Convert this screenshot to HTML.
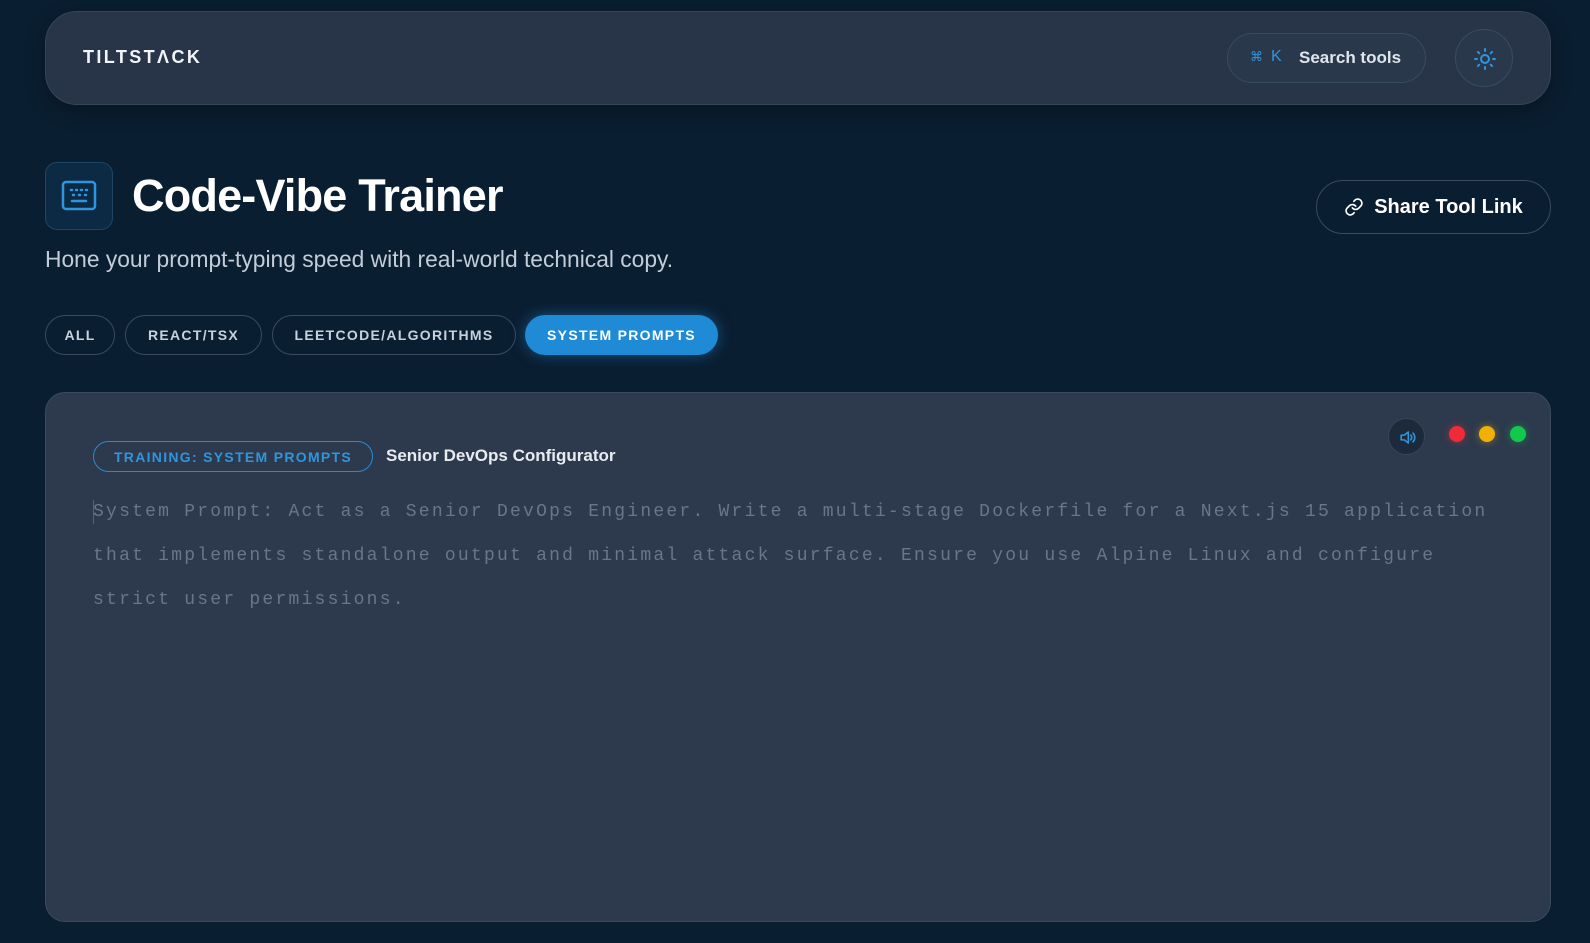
<!DOCTYPE html>
<html><head><meta charset="utf-8"><style>
*{box-sizing:border-box;margin:0;padding:0}
body{width:1590px;height:943px;background:#0a1e31;font-family:"Liberation Sans",sans-serif;position:relative;overflow:hidden;color:#fff}
.abs{position:absolute}
.hdr{left:45px;top:11px;width:1506px;height:94px;background:#283548;border:1px solid #34445a;border-radius:32px;box-shadow:0 6px 20px rgba(0,0,0,.3)}
.logo{left:83px;top:47px;font-size:18px;font-weight:700;letter-spacing:2.4px;color:#f1f4f8}
.search{left:1227px;top:33px;width:199px;height:50px;border:1px solid #3a4a60;border-radius:25px;background:#2a384b}
.sun{left:1455px;top:29px;width:58px;height:58px;border-radius:50%;border:1px solid #3a4a60;background:#2a384b}
.ibox{left:45px;top:162px;width:68px;height:68px;border-radius:12px;background:#0d2a44;border:1px solid #1e4566}
h1{position:absolute;left:132px;top:170px;font-size:45px;font-weight:700;letter-spacing:-0.8px;color:#fff}
.sub{left:45px;top:246px;font-size:22.8px;color:#c3ccd8}
.share{left:1316px;top:180px;width:235px;height:54px;border:1px solid #3a4a60;border-radius:27px;font-size:20px;font-weight:700;display:flex;align-items:center;justify-content:center;gap:10px}
.tab{top:315px;height:40px;border:1px solid #3a4a60;border-radius:20px;font-size:14px;font-weight:700;letter-spacing:1.3px;color:#c9d1dc;display:flex;align-items:center;justify-content:center}
.tab.on{background:#1f8ad6;border-color:#1f8ad6;color:#fff;box-shadow:0 0 14px rgba(31,138,214,.5)}
.card{left:45px;top:392px;width:1506px;height:530px;background:#2d3a4d;border:1px solid #3a4a60;border-radius:20px}
.badge{left:93px;top:441px;width:280px;height:31px;border:1.5px solid #2a8ad0;border-radius:16px;color:#2f95dd;font-size:14px;font-weight:700;letter-spacing:1.3px;display:flex;align-items:center;justify-content:center}
.ttl{left:386px;top:446px;font-size:17px;font-weight:700;color:#e8ecf1}
.txt{left:93px;top:490px;width:1430px;font-family:"Liberation Mono",monospace;font-size:18px;letter-spacing:2.23px;line-height:44px;color:#687689}
.dot{width:16px;height:16px;border-radius:50%;top:426px}
</style></head><body>
<div class="abs hdr"></div>
<div class="abs logo">TILTST&#923;CK</div>
<div class="abs search"><span class="abs" style="left:22px;top:15px;font-size:13px;color:#2f95dd">&#8984;</span><span class="abs" style="left:43px;top:14px;font-size:16px;color:#2f95dd">K</span><span class="abs" style="left:71px;top:14px;font-size:17px;font-weight:700;color:#dfe5ec">Search tools</span></div>
<div class="abs sun"><svg class="abs" style="left:17px;top:17px" width="24" height="24" viewBox="0 0 24 24" fill="none" stroke="#2f95dd" stroke-width="2" stroke-linecap="round"><circle cx="12" cy="12" r="4"/><path d="M12 2v2M12 20v2M2 12h2M20 12h2M4.9 4.9l1.4 1.4M17.7 17.7l1.4 1.4M4.9 19.1l1.4-1.4M17.7 6.3l1.4-1.4"/></svg></div>
<div class="abs ibox"><svg class="abs" style="left:15px;top:16px" width="36" height="34" viewBox="0 0 36 34" fill="none" stroke="#2f95dd" stroke-width="2.5"><rect x="2" y="3" width="32" height="27" rx="3"/><path d="M10 11h1M15 11h1M20 11h1M25 11h1M12 16h1M18 16h1M24 16h1M11 22h14" stroke-linecap="round"/></svg></div>
<h1>Code-Vibe Trainer</h1>
<div class="abs sub">Hone your prompt-typing speed with real-world technical copy.</div>
<div class="abs share"><svg width="20" height="20" viewBox="0 0 24 24" fill="none" stroke="#fff" stroke-width="2" stroke-linecap="round"><path d="M10 13a5 5 0 0 0 7.5.5l3-3a5 5 0 0 0-7-7l-1.7 1.7"/><path d="M14 11a5 5 0 0 0-7.5-.5l-3 3a5 5 0 0 0 7 7l1.7-1.7"/></svg>Share Tool Link</div>
<div class="abs tab" style="left:45px;width:70px">ALL</div>
<div class="abs tab" style="left:125px;width:137px">REACT/TSX</div>
<div class="abs tab" style="left:272px;width:244px">LEETCODE/ALGORITHMS</div>
<div class="abs tab on" style="left:525px;width:193px">SYSTEM PROMPTS</div>
<div class="abs card"></div>
<div class="abs badge">TRAINING: SYSTEM PROMPTS</div>
<div class="abs ttl">Senior DevOps Configurator</div>
<div class="abs" style="left:1388px;top:418px;width:37px;height:37px;border-radius:50%;background:#1d2a3b;border:1px solid #34445a"><svg class="abs" style="left:9px;top:9px" width="19" height="19" viewBox="0 0 24 24" fill="none" stroke="#2f95dd" stroke-width="2" stroke-linejoin="round" stroke-linecap="round"><path d="M4 9h4l5-4v14l-5-4H4z"/><path d="M16 9a4 4 0 0 1 0 6M19 6.5a8 8 0 0 1 0 11"/></svg></div>
<div class="abs dot" style="left:1449px;background:#ef2b3a;box-shadow:0 0 8px rgba(239,43,58,.5)"></div>
<div class="abs dot" style="left:1479px;background:#f2b005;box-shadow:0 0 8px rgba(242,176,5,.5)"></div>
<div class="abs dot" style="left:1510px;background:#12c94c;box-shadow:0 0 8px rgba(18,201,76,.5)"></div>
<div class="abs" style="left:93px;top:500px;width:1px;height:24px;background:#2f6fa8"></div>
<div class="abs txt">System Prompt: Act as a Senior DevOps Engineer. Write a multi-stage Dockerfile for a Next.js 15 application that implements standalone output and minimal attack surface. Ensure you use Alpine Linux and configure strict user permissions.</div>
</body></html>
